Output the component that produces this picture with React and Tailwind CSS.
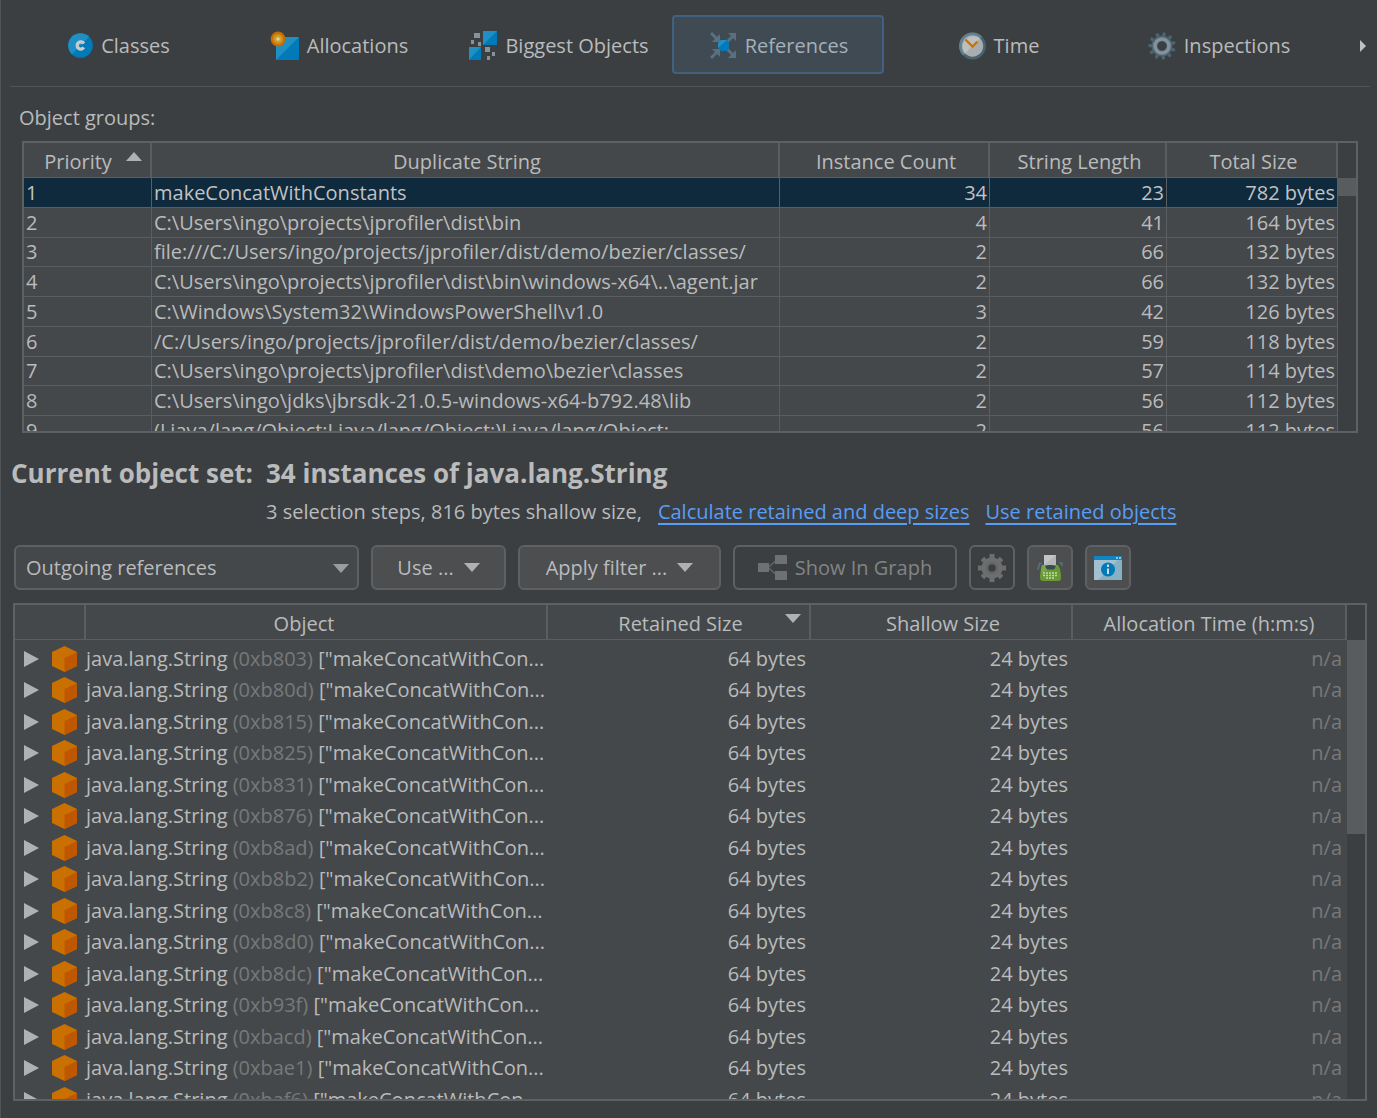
const tabs = [
  { name: 'Classes', icon: ClassesIcon },
  { name: 'Allocations', icon: AllocationsIcon },
  { name: 'Biggest Objects', icon: BiggestIcon },
  { name: 'References', icon: ReferencesIcon },
  { name: 'Time', icon: TimeIcon },
  { name: 'Inspections', icon: InspectionsIcon },
];

const groups = [
  ['makeConcatWithConstants', 34, 23, 782],
  ['C:\\Users\\ingo\\projects\\jprofiler\\dist\\bin', 4, 41, 164],
  ['file:///C:/Users/ingo/projects/jprofiler/dist/demo/bezier/classes/', 2, 66, 132],
  ['C:\\Users\\ingo\\projects\\jprofiler\\dist\\bin\\windows-x64\\..\\agent.jar', 2, 66, 132],
  ['C:\\Windows\\System32\\WindowsPowerShell\\v1.0', 3, 42, 126],
  ['/C:/Users/ingo/projects/jprofiler/dist/demo/bezier/classes/', 2, 59, 118],
  ['C:\\Users\\ingo\\projects\\jprofiler\\dist\\demo\\bezier\\classes', 2, 57, 114],
  ['C:\\Users\\ingo\\jdks\\jbrsdk-21.0.5-windows-x64-b792.48\\lib', 2, 56, 112],
  ['(Ljava/lang/Object;Ljava/lang/Object;)Ljava/lang/Object;', 2, 56, 112],
];

const objects = [
  '0xb803', '0xb80d', '0xb815', '0xb825', '0xb831', '0xb876', '0xb8ad', '0xb8b2',
  '0xb8c8', '0xb8d0', '0xb8dc', '0xb93f', '0xbacd', '0xbae1', '0xbaf6',
];

function ClassesIcon() {
  return (
    <svg width="25" height="25" viewBox="0 0 25 25" aria-hidden="true">
      <circle cx="12.5" cy="12.5" r="12.3" fill="#007ab8" />
      <path d="M3.8 21.2A12.3 12.3 0 0 1 21.2 3.8Z" fill="#1f8fc4" />
      <path d="M15.8 10.6A3.6 3.6 0 1 0 15.8 14.4" fill="none" stroke="#c9cccd" strokeWidth="3.2" />
    </svg>
  );
}

function AllocationsIcon() {
  return (
    <svg width="29" height="29" viewBox="0 0 29 29" aria-hidden="true">
      <path d="M6 6H29V29H6Z" fill="#007ab8" />
      <path d="M6 6H29L6 29Z" fill="#1f8fc4" />
      <circle cx="8" cy="8" r="7.4" fill="#c96c00" />
      <circle cx="8" cy="8" r="5.2" fill="#cf8f1c" />
      <circle cx="8" cy="8" r="3" fill="#d3a63c" />
      <circle cx="8" cy="8" r="1.5" fill="#e0d4b0" />
    </svg>
  );
}

function BiggestIcon() {
  return (
    <svg width="28" height="29" viewBox="0 0 28 29" aria-hidden="true">
      <path d="M14 0H28V14H14ZM0 16H12V29H0Z" fill="#007ab8" />
      <path d="M14 0H28L14 14ZM0 16H12L0 29Z" fill="#1f8fc4" />
      <path d="M5 2h6v5H5zM2 9h3v4H2zM9 11h3v4H9zM16 16h5v5h-5zM23 21h3v4h-3zM18 25h3v4h-3z" fill="#87929a" />
    </svg>
  );
}

function ReferencesIcon() {
  return (
    <svg width="27" height="27" viewBox="0 0 27 27" aria-hidden="true">
      <g fill="none" stroke="#587080" strokeWidth="3">
        <path d="M1 1L8 8M1 26L8 19M17 10L24 3M17 17L24 24" />
      </g>
      <path d="M10 2V10H2ZM10 25V17H2ZM18 1H26V9ZM26 18V26H18Z" fill="#587080" />
      <path d="M11 8H17L19 11V16L17 19H11L8 16V11Z" fill="#007ab8" />
      <path d="M11 8H17L8 16V11Z" fill="#1f8fc4" />
    </svg>
  );
}

function TimeIcon() {
  return (
    <svg width="27" height="28" viewBox="0 0 27 28" aria-hidden="true">
      <circle cx="13.5" cy="14" r="13.4" fill="#4a6370" />
      <path d="M4 23.5A13.4 13.4 0 0 1 23 4.5Z" fill="#65808d" />
      <circle cx="13.5" cy="14" r="10.7" fill="#a8adaf" />
      <path d="M6 21.5A10.7 10.7 0 0 1 21 6.5Z" fill="#bdbfc0" />
      <path d="M6.5 7.5L13.5 14.5L18.5 9.5" fill="none" stroke="#cc7400" strokeWidth="2.4" />
    </svg>
  );
}

function GearTeeth({ count, color, width }) {
  return Array.from({ length: count }, (_, i) => (
    <path
      key={i}
      d="M14 1.8V6"
      stroke={color}
      strokeWidth={width}
      strokeLinecap="round"
      transform={`rotate(${(i * 360) / count + 10} 14 14)`}
    />
  ));
}

function InspectionsIcon() {
  return (
    <svg width="28" height="28" viewBox="0 0 28 28" aria-hidden="true">
      <GearTeeth count={11} color="#4c6370" width={3.4} />
      <circle cx="14" cy="14" r="7.5" fill="none" stroke="#4c6370" strokeWidth="6" />
      <circle cx="14" cy="14" r="7" fill="none" stroke="#84919a" strokeWidth="3.6" />
    </svg>
  );
}

function GearIcon() {
  return (
    <svg width="28" height="28" viewBox="0 0 28 28" aria-hidden="true">
      <g stroke="#6d6e6f" strokeWidth="5">
        <path d="M14 0V28M0 14H28M4.4 4.4L23.6 23.6M4.4 23.6L23.6 4.4" />
      </g>
      <circle cx="14" cy="14" r="10.5" fill="#6d6e6f" />
      <circle cx="14" cy="14" r="6" fill="#636465" />
      <circle cx="14" cy="14" r="3.6" fill="#3c3f41" />
    </svg>
  );
}

function GraphIcon() {
  return (
    <svg width="29" height="25" viewBox="0 0 29 25" aria-hidden="true">
      <path d="M10 12.5L20 4M10 12.5L20 21" fill="none" stroke="#646667" strokeWidth="1.5" />
      <path d="M0 8H11V17H0ZM17 0H29V9H17ZM17 16H29V25H17Z" fill="#6f7071" />
    </svg>
  );
}

function TypewriterIcon() {
  return (
    <svg width="26" height="27" viewBox="0 0 26 27" aria-hidden="true">
      <path d="M3 9H23V12H3Z" fill="#3c525d" />
      <path d="M1 16L2.5 9.5H5M25 12V9H22" fill="none" stroke="#56707c" strokeWidth="1.6" />
      <path d="M7 1H19V12H7Z" fill="#b4b6b8" />
      <path d="M7 1H19L7 11Z" fill="#c2c4c5" />
      <path d="M5 11H21L23 15L24 21V24Q24 27 21 27H6Q3 27 3 24V21L4 15Z" fill="#699a32" />
      <path d="M5 11H21L4 19V15Z" fill="#7aa648" />
      <path d="M8 12Q13.5 10 19 12L17 15.500H10Z" fill="#344b50" />
      <path d="M6 19H21M6 21.5H21M9 24H18" stroke="#c8d4b8" strokeWidth="1.3" strokeDasharray="2 1" />
    </svg>
  );
}

function InfoWindowIcon() {
  return (
    <svg width="28" height="24" viewBox="0 0 28 24" aria-hidden="true">
      <path d="M0 0H28V24H0Z" fill="#86b0c4" />
      <path d="M0 4H24L4 24H0Z" fill="#a2c0cf" />
      <path d="M0 0H28V4H0Z" fill="#0f86c0" />
      <path d="M22 1h2v2h-2zM25 1h2v2h-2z" fill="#8ec2dc" />
      <circle cx="14" cy="13.5" r="7" fill="#007ab8" />
      <path d="M14 8.5V11M14 12.5V18" stroke="#cfd9de" strokeWidth="2" />
    </svg>
  );
}

function CubeIcon() {
  return (
    <svg width="25" height="26" viewBox="0 0 25 26" aria-hidden="true">
      <path d="M12.5 0L25 6V20L12.5 26L0 20V6Z" fill="#ca7000" />
      <path d="M12.5 12L25 6V20L12.5 26Z" fill="#bf5700" />
    </svg>
  );
}

function Triangle({ dir, className }) {
  const shapes = {
    up: { w: 16, h: 9, d: 'M0 9L8 0L16 9Z' },
    down: { w: 16, h: 9, d: 'M0 0H16L8 9Z' },
    right: { w: 15, h: 16, d: 'M0 0L15 8L0 16Z' },
  };
  const { w, h, d } = shapes[dir];
  return (
    <svg width={w} height={h} viewBox={`0 0 ${w} ${h}`} className={className} aria-hidden="true">
      <path d={d} fill="currentColor" />
    </svg>
  );
}

function Scrollbar({ thumb }) {
  return (
    <div className="w-[18px] shrink-0 pt-[35px]">
      <div className={`w-full bg-[#585c5e] ${thumb}`} />
    </div>
  );
}

function HeadCell({ children, sort, pad = 'pl-1' }) {
  return (
    <th className={`relative h-[35px] border-r-2 border-b border-[#5b5e60] pt-1 pb-0 text-center font-normal ${pad}`}>
      {children}
      {sort && <Triangle dir={sort} className="absolute top-[9px] right-2 text-[#afb1b3]" />}
    </th>
  );
}

function GroupTable() {
  const cell = 'border-r border-b border-[#5b5e60] px-[2px] py-0';
  return (
    <div className="mr-[19px] ml-[21px] flex h-[292px] shrink-0 border-2 border-[#5e6062]">
      <div className="flex-1 overflow-hidden bg-[#45484a]">
        <table className="w-full table-fixed border-separate border-spacing-0 leading-7 whitespace-nowrap">
          <colgroup>
            <col className="w-[128px]" />
            <col />
            <col className="w-[210px]" />
            <col className="w-[177px]" />
            <col className="w-[171px]" />
          </colgroup>
          <thead>
            <tr>
              <HeadCell sort="up" pad="pr-[18px]">Priority</HeadCell>
              <HeadCell>Duplicate String</HeadCell>
              <HeadCell>Instance Count</HeadCell>
              <HeadCell>String Length</HeadCell>
              <HeadCell>Total Size</HeadCell>
            </tr>
          </thead>
          <tbody>
            {groups.map(([text, count, length, size], i) => (
              <tr key={i} className={`h-[30px] nth-[4n+3]:h-[29px] ${i === 0 ? 'bg-[#0f293d] text-[#c0c2c3]' : ''}`}>
                <td className={cell}>{i + 1}</td>
                <td className={cell}>{text}</td>
                <td className={`${cell} text-right`}>{count}</td>
                <td className={`${cell} text-right`}>{length}</td>
                <td className={`${cell} text-right`}>{size} bytes</td>
              </tr>
            ))}
          </tbody>
        </table>
      </div>
      <Scrollbar thumb="h-[18px]" />
    </div>
  );
}

function ObjectTable() {
  return (
    <div className="mt-[13px] mr-[10px] mb-[17px] ml-3 flex min-h-0 flex-1 border-2 border-[#5e6062]">
      <div className="flex-1 overflow-hidden bg-[#45484a]">
        <table className="w-full table-fixed border-separate border-spacing-0 leading-7 whitespace-nowrap">
          <colgroup>
            <col className="w-[71px]" />
            <col />
            <col className="w-[263px]" />
            <col className="w-[262px]" />
            <col className="w-[274px]" />
          </colgroup>
          <thead>
            <tr>
              <HeadCell />
              <HeadCell pad="pr-6">Object</HeadCell>
              <HeadCell sort="down">Retained Size</HeadCell>
              <HeadCell>Shallow Size</HeadCell>
              <HeadCell pad="pl-0">Allocation Time (h:m:s)</HeadCell>
            </tr>
            <tr className="h-[3px]" />
          </thead>
          <tbody>
            {objects.map((id) => (
              <tr key={id} className="odd:h-[31px] even:h-8">
                <td className="p-0">
                  <div className="flex items-center gap-[13px] pl-[9px]">
                    <button type="button" aria-label="Expand">
                      <Triangle dir="right" className="text-[#afb1b3]" />
                    </button>
                    <CubeIcon />
                  </div>
                </td>
                <td className="p-0">
                  java.lang.String <span className="text-[#77797a]">({id})</span> ["makeConcatWithCon...
                </td>
                <td className="p-0 pr-[5px] text-right">64 bytes</td>
                <td className="p-0 pr-[5px] text-right">24 bytes</td>
                <td className="p-0 pr-[5px] text-right text-[#77797a]">n/a</td>
              </tr>
            ))}
          </tbody>
        </table>
      </div>
      <Scrollbar thumb="h-[194px]" />
    </div>
  );
}

export default function App() {
  const button = 'flex h-[45px] items-center justify-center rounded-md border-2 border-[#5e6062] bg-[#4c4e50]';
  return (
    <div className="flex h-screen flex-col overflow-hidden border-l border-[#515456] bg-[#3c3f41] font-['Open_Sans','Noto_Sans',sans-serif] text-[20px] text-[#b9bbbc]">
      <nav className="mr-[7px] ml-[9px] flex h-[87px] shrink-0 border-b border-[#515456] pt-[15px] pb-3 pl-[2px]">
        <div className="grid flex-1 grid-cols-6 gap-2">
          {tabs.map(({ name, icon: Icon }) => (
            <button
              key={name}
              type="button"
              className={`flex items-center justify-center gap-2 rounded border-2 pt-[2px] pl-[2px] whitespace-nowrap ${
                name === 'References' ? 'border-[#416180] bg-[#404a53] text-[#a3b1bc]' : 'border-transparent'
              }`}
            >
              <Icon />
              {name}
            </button>
          ))}
        </div>
        <button type="button" aria-label="More tabs" className="flex w-[46px] items-center justify-end pt-[2px] pr-1">
          <svg width="6" height="12" viewBox="0 0 6 12" aria-hidden="true">
            <path d="M0 0L6 6L0 12Z" fill="#bfc1c2" />
          </svg>
        </button>
      </nav>

      <h2 className="mt-4 mb-2 ml-[18px] leading-[30px]">Object groups:</h2>
      <GroupTable />

      <div className="mt-5 ml-[10px] grid grid-cols-[255px_1fr] whitespace-nowrap">
        <span className="text-[26px] leading-10 font-bold">Current object set:</span>
        <span className="text-[26px] leading-10 font-bold">34 instances of java.lang.String</span>
        <p className="col-start-2 flex leading-[38px]">
          3 selection steps, 816 bytes shallow size,
          <a href="#sizes" className="ml-4 text-[#589df6] underline underline-offset-4">Calculate retained and deep sizes</a>
          <a href="#retained" className="ml-4 text-[#589df6] underline underline-offset-4">Use retained objects</a>
        </p>
      </div>

      <div className="mt-[14px] ml-[13px] flex shrink-0 gap-3 whitespace-nowrap">
        <div className="relative">
          <select
            aria-label="View"
            className="h-[45px] w-[345px] appearance-none rounded-md border-2 border-[#5e6062] bg-[#45484a] pl-[10px]"
          >
            <option>Outgoing references</option>
          </select>
          <Triangle dir="down" className="pointer-events-none absolute top-[19px] right-[10px] text-[#9a9c9d]" />
        </div>
        <button type="button" className={`${button} w-[135px] gap-[10px]`}>
          Use ...
          <Triangle dir="down" className="text-[#afb1b3]" />
        </button>
        <button type="button" className={`${button} w-[203px] gap-[10px]`}>
          Apply filter ...
          <Triangle dir="down" className="text-[#afb1b3]" />
        </button>
        <button
          type="button"
          disabled
          className="flex h-[45px] w-[224px] items-center justify-center gap-2 rounded-md border-2 border-[#5e6062] text-[#828485]"
        >
          <GraphIcon />
          Show In Graph
        </button>
        <button
          type="button"
          disabled
          aria-label="Settings"
          className="flex h-[45px] w-[46px] items-center justify-center rounded-md border-2 border-[#5e6062]"
        >
          <GearIcon />
        </button>
        <button type="button" aria-label="Script" className={`${button} w-[46px]`}>
          <TypewriterIcon />
        </button>
        <button type="button" aria-label="Information" className={`${button} w-[46px]`}>
          <InfoWindowIcon />
        </button>
      </div>

      <ObjectTable />
    </div>
  );
}
